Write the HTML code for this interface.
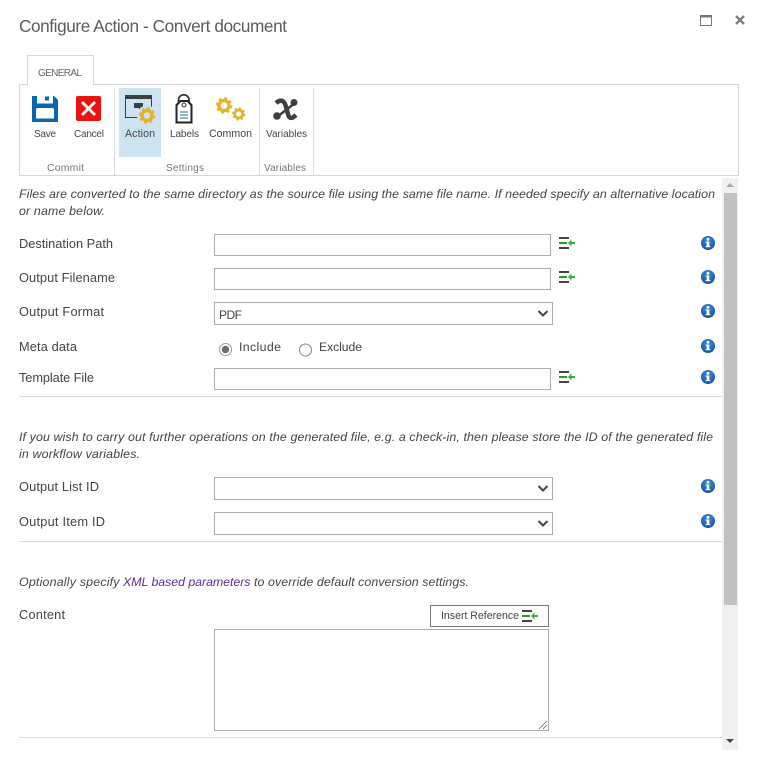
<!DOCTYPE html>
<html lang="en"><head><meta charset="utf-8"><title>Configure Action - Convert document</title>
<style>
html,body{margin:0;padding:0;background:#fff;width:759px;height:760px;overflow:hidden}
svg{position:absolute;left:0;top:0;display:block}
text{font-family:"Liberation Sans",sans-serif;fill:#444;font-size:12.8px}
.i{font-style:italic;font-size:12.4px}
.r{font-size:10px}
.g{font-size:10px;fill:#777}
.b{fill:#fff;stroke:#ababab;stroke-width:1}
.sep{stroke:#dcdcdc;stroke-width:1}
</style></head><body>
<svg width="759" height="760" viewBox="0 0 759 760" xmlns="http://www.w3.org/2000/svg">
<defs>
<g id="ref"><path d="M0 0h10M0 10h10" stroke="#444" stroke-width="2" fill="none"/><path d="M0 5h8" stroke="#2a9a35" stroke-width="2"/><path d="M11 5h5" stroke="#35b040" stroke-width="2"/><path d="M9 5l3.500-3.500v7z" fill="#35b040"/></g>
<radialGradient id="ig" cx=".5" cy=".3" r=".8"><stop offset="0" stop-color="#3d8fd8"/><stop offset="1" stop-color="#0f4c96"/></radialGradient>
<g id="inf"><circle r="7" fill="url(#ig)"/><rect x="-1.300" y="-1.500" width="2.600" height="5.500" fill="#fff"/><rect x="-2.300" y="-1.500" width="3" height="1.200" fill="#fff"/><rect x="-2.300" y="3" width="4.600" height="1.200" fill="#fff"/><circle cy="-3.700" r="1.400" fill="#fff"/></g>
<path id="chev" d="M0 0l4.500 4.500L9 0" fill="none" stroke="#444" stroke-width="2"/>
<g id="gear"><circle r="5" fill="none" stroke="#e2b22e" stroke-width="3.400"/><circle r="7.200" fill="none" stroke="#e2b22e" stroke-width="2.200" stroke-dasharray="2.800 2.850"/></g>
</defs>

<!-- Title bar -->
<text x="19" y="32" style="font-size:17.2px;fill:#5c5c5c" textLength="268" lengthAdjust="spacing">Configure Action - Convert document</text>
<rect x="700.500" y="15.500" width="11" height="10" fill="none" stroke="#777"/><rect x="700" y="15" width="12" height="2.500" fill="#777"/>
<path d="M736 16l8 8M744 16l-8 8" stroke="#808080" stroke-width="2.400"/>

<!-- Ribbon -->
<path d="M19.500 176V84.500H27.500M93.500 84.500H738.500V176M19 175.500H739" fill="none" stroke="#d6d6d6"/>
<path d="M27.500 85V55.500H93.500V85" fill="#fff" stroke="#d6d6d6"/>
<text x="38" y="76" style="font-size:10px;fill:#666" textLength="44" lengthAdjust="spacing">GENERAL</text>
<path d="M114.500 88V175M259.500 88V175M313.500 88V175" class="sep"/>
<rect x="119" y="88" width="42" height="69" fill="#cde3f2"/>

<!-- Save -->
<path d="M32 96h22l4 4v22H32z" fill="#0a66b0"/><rect x="37" y="96" width="16" height="7.500" fill="#fff"/><rect x="45" y="96.500" width="4" height="4" fill="#0a66b0"/><path d="M36 118.500v-8.500q0-2 2-2h14q2 0 2 2v8.500z" fill="#fff"/>
<!-- Cancel -->
<rect x="76" y="96" width="25" height="25" rx="2" fill="#ee1111"/><path d="M82 102l13 13M95 102l-13 13" stroke="#fff" stroke-width="2.800"/>
<!-- Action -->
<rect x="125.500" y="95.500" width="26" height="22" fill="none" stroke="#3a3f45"/><rect x="125" y="95" width="27" height="4" fill="#3a3f45"/><path d="M134 103h9v7h-4v-2h-5z" fill="#3a3f45"/>
<circle cx="147" cy="115.500" r="10" fill="#cde3f2"/><use href="#gear" transform="translate(147 115.500)"/>
<!-- Labels -->
<path d="M178.500 104v-4a5 5 0 0 1 10.500 0v4" fill="none" stroke="#333" stroke-width="1.800"/><path d="M176.500 105l4-4h7l4 4v17.500h-15z" fill="#fff" stroke="#222" stroke-width="2"/><circle cx="184" cy="105" r="2" fill="none" stroke="#333"/><path d="M180 112h8M180 115h8M180 118h8" stroke="#1c63a8"/>
<!-- Common -->
<use href="#gear" transform="translate(224 105.500)"/><use href="#gear" transform="translate(238.700 114) scale(.8)"/>
<!-- Variables -->
<path d="M276 103C282 98 285 102 286 107L288 114C289 119 292 119 296 115" fill="none" stroke="#3f3f3f" stroke-width="4.500"/>
<path d="M295 103L277 117" stroke="#3f3f3f" stroke-width="2.500"/><circle cx="294" cy="102.500" r="3.500" fill="#3f3f3f"/><circle cx="277" cy="116" r="3.800" fill="#3f3f3f"/>

<text class="r" x="34" y="137" textLength="22" lengthAdjust="spacing">Save</text>
<text class="r" x="74" y="137" textLength="30" lengthAdjust="spacing">Cancel</text>
<text class="r" x="125" y="137" style="font-size:10.600px" textLength="30" lengthAdjust="spacing">Action</text>
<text class="r" x="170" y="137" textLength="29" lengthAdjust="spacing">Labels</text>
<text class="r" x="209" y="137" style="font-size:10.600px" textLength="43" lengthAdjust="spacing">Common</text>
<text class="r" x="266" y="137" textLength="41" lengthAdjust="spacing">Variables</text>
<text class="g" x="47" y="171" style="font-size:10.500px" textLength="37" lengthAdjust="spacing">Commit</text>
<text class="g" x="166" y="171" textLength="38" lengthAdjust="spacing">Settings</text>
<text class="g" x="264" y="171" textLength="42" lengthAdjust="spacing">Variables</text>

<!-- Scrollbar -->
<rect x="722" y="178" width="16" height="572" fill="#f0f0f0"/>
<rect x="724" y="193" width="13" height="412" fill="#c1c1c1"/>
<path d="M726 187l4-4 4 4z" fill="#aaa"/><path d="M726 739h8l-4 4z" fill="#444"/>

<!-- Form -->
<text class="i" x="19" y="198" textLength="696" lengthAdjust="spacing">Files are converted to the same directory as the source file using the same file name. If needed specify an alternative location</text>
<text class="i" x="19" y="215" textLength="86" lengthAdjust="spacing">or name below.</text>

<text x="19" y="248" textLength="94" lengthAdjust="spacing">Destination Path</text>
<text x="19" y="282" textLength="96" lengthAdjust="spacing">Output Filename</text>
<text x="19" y="316" textLength="85" lengthAdjust="spacing">Output Format</text>
<text x="19" y="351" textLength="58" lengthAdjust="spacing">Meta data</text>
<text x="19" y="382" textLength="75" lengthAdjust="spacing">Template File</text>

<rect class="b" x="214.500" y="234.500" width="336" height="21"/>
<rect class="b" x="214.500" y="268.500" width="336" height="21"/>
<rect class="b" x="214.500" y="302.500" width="338" height="22"/>
<rect class="b" x="214.500" y="368.500" width="336" height="21"/>
<text x="219" y="319" style="font-size:12px" textLength="23" lengthAdjust="spacing">PDF</text>
<use href="#chev" x="538.500" y="311"/>

<use href="#ref" x="559" y="238"/><use href="#ref" x="559" y="272"/><use href="#ref" x="559" y="372"/>

<circle cx="225.500" cy="349.500" r="6" fill="#fff" stroke="#999"/><circle cx="225.500" cy="349.500" r="3.700" fill="#6e6e6e"/>
<text x="239" y="351" style="font-size:12.400px" textLength="42" lengthAdjust="spacing">Include</text>
<circle cx="305.500" cy="350" r="6" fill="#fff" stroke="#888"/>
<text x="319" y="351" style="font-size:12.200px" textLength="43" lengthAdjust="spacing">Exclude</text>

<use href="#inf" x="708" y="243"/><use href="#inf" x="708" y="277"/><use href="#inf" x="708" y="311"/><use href="#inf" x="708" y="346"/><use href="#inf" x="708" y="377"/><use href="#inf" x="708" y="486"/><use href="#inf" x="708" y="521"/>

<path class="sep" d="M19 396.500H722M19 541.500H722M19 737.500H722"/>

<text class="i" x="19" y="441" textLength="694" lengthAdjust="spacing">If you wish to carry out further operations on the generated file, e.g. a check-in, then please store the ID of the generated file</text>
<text class="i" x="19" y="458" textLength="121" lengthAdjust="spacing">in workflow variables.</text>

<text x="19" y="491" textLength="80" lengthAdjust="spacing">Output List ID</text>
<text x="19" y="526" textLength="86" lengthAdjust="spacing">Output Item ID</text>
<rect class="b" x="214.500" y="477.500" width="338" height="22"/>
<rect class="b" x="214.500" y="512.500" width="338" height="22"/>
<use href="#chev" x="538.500" y="486"/><use href="#chev" x="538.500" y="521"/>

<text class="i" x="19" y="586" textLength="100.500" lengthAdjust="spacing">Optionally specify</text>
<text class="i" x="123" y="586" style="fill:#5c2d91" textLength="127.500" lengthAdjust="spacing">XML based parameters</text>
<text class="i" x="254" y="586" textLength="215" lengthAdjust="spacing">to override default conversion settings.</text>

<text x="19" y="619" textLength="46" lengthAdjust="spacing">Content</text>
<rect x="430.500" y="605.500" width="118" height="21" fill="#fff" stroke="#777"/>
<text x="441" y="619" style="font-size:10.600px" textLength="78" lengthAdjust="spacing">Insert Reference</text>
<use href="#ref" x="522" y="611"/>
<rect class="b" x="214.500" y="629.500" width="334" height="101"/>
<path d="M539 729l8-8M543 729l4-4" stroke="#666" stroke-width=".8"/>
</svg>
</body></html>
